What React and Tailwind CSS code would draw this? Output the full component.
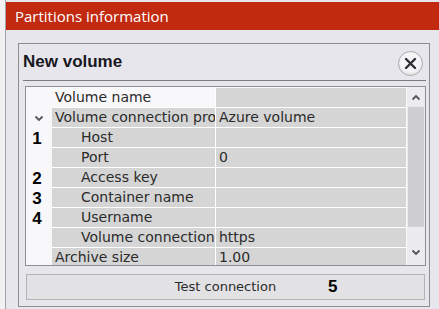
const rows = [
  { name: 'Volume name', value: '', level: 0, active: true },
  { name: 'Volume connection provider', value: 'Azure volume', level: 0, expander: true },
  { name: 'Host', value: '', level: 1, mark: '1' },
  { name: 'Port', value: '0', level: 1 },
  { name: 'Access key', value: '', level: 1, mark: '2' },
  { name: 'Container name', value: '', level: 1, mark: '3' },
  { name: 'Username', value: '', level: 1, mark: '4' },
  { name: 'Volume connection type', value: 'https', level: 1 },
  { name: 'Archive size', value: '1.00', level: 0 },
]

function Chevron({ up }) {
  return (
    <svg width="10" height="7" viewBox="0 0 10 7" className="text-[#555]">
      <path
        d={up ? 'M1.5 5.5 L5 2 L8.5 5.5' : 'M1.5 1.5 L5 5 L8.5 1.5'}
        fill="none"
        stroke="currentColor"
        strokeWidth="1.8"
      />
    </svg>
  )
}

function Row({ row }) {
  return (
    <div className="flex h-[20px] shrink-0">
      <div className="flex w-[26px] shrink-0 items-center justify-center bg-[#f8f8fb]">
        {row.expander && <Chevron />}
        {row.mark && (
          <span className="-ml-[4px] font-['Liberation_Sans',sans-serif] text-[17px] font-bold leading-none text-black">
            {row.mark}
          </span>
        )}
      </div>
      <div
        className={`w-[164px] shrink-0 overflow-hidden whitespace-nowrap border-b border-r border-white leading-[19px] ${
          row.active ? 'bg-[#f8f8fb]' : 'bg-[#d5d5d5]'
        } ${row.level ? 'pl-[29px]' : 'pl-[3px]'}`}
      >
        {row.name}
      </div>
      <div className="flex-1 overflow-hidden whitespace-nowrap border-b border-white bg-[#d5d5d5] pl-[3px] leading-[19px]">
        {row.value}
      </div>
    </div>
  )
}

export default function App() {
  return (
    <div className="flex h-[309px] w-[439px] bg-[#f1f0f3] font-['DejaVu_Sans',sans-serif] text-[14px] text-[#2b2b2b]">
      <div className="ml-[5px] flex flex-1 flex-col border-l border-[#a3a3a8] bg-[#e8e6ed] pt-[2px]">
        {/* Title bar */}
        <div className="flex h-[28px] shrink-0 items-center bg-[#c22a10] pl-[9px] font-['Open_Sans',sans-serif] text-[15px] text-white">
          Partitions information
        </div>

        {/* Panel */}
        <div className="ml-[12px] mt-[13px] flex h-[264px] w-[412px] flex-col border border-[#8d8d92] pl-[4px] pr-[3px]">
          <div className="flex h-[37px] shrink-0 items-center justify-between border-b border-[#7c7c80]">
            <span className="font-['Liberation_Sans',sans-serif] text-[17px] font-bold text-[#18181f]">
              New volume
            </span>
            <button className="mr-[3px] mt-[2px] flex h-[25px] w-[25px] items-center justify-center rounded-full border border-[#a9a9ae] bg-[#f5f5f7] shadow-[inset_0_-2px_3px_rgba(0,0,0,0.08)]">
              <svg width="13" height="13" viewBox="0 0 13 13">
                <path d="M2 2 L11 11 M11 2 L2 11" stroke="#2f2f33" strokeWidth="2.4" strokeLinecap="round" />
              </svg>
            </button>
          </div>

          {/* Property grid */}
          <div className="ml-[2px] mt-[5px] flex h-[180px] w-[401px] shrink-0 border border-[#8f8f94] bg-[#f8f8fb] text-[14px]">
            <div className="flex flex-1 flex-col overflow-hidden pt-[1px]">
              {rows.map((row) => (
                <Row key={row.name} row={row} />
              ))}
            </div>
            <div className="flex w-[19px] shrink-0 flex-col border-l border-[#f8f8fb] bg-[#ececef]">
              <div className="flex h-[20px] items-center justify-center">
                <Chevron up />
              </div>
              <div className="ml-[1px] mr-[1px] h-[120px] bg-[#cfcfd1]" />
              <div className="flex-1" />
              <div className="flex h-[22px] items-center justify-center pb-[4px]">
                <Chevron />
              </div>
            </div>
          </div>

          {/* Button */}
          <button className="relative ml-[3px] mt-[8px] flex h-[26px] w-[399px] shrink-0 items-center justify-center border border-[#b3b3b6] bg-[#e2e2e4] text-[13px] text-[#2b2b2b]">
            <span>Test connection</span>
            <span className="absolute left-[301px] font-['Liberation_Sans',sans-serif] text-[17px] font-bold text-black">5</span>
          </button>
        </div>
      </div>
    </div>
  )
}
